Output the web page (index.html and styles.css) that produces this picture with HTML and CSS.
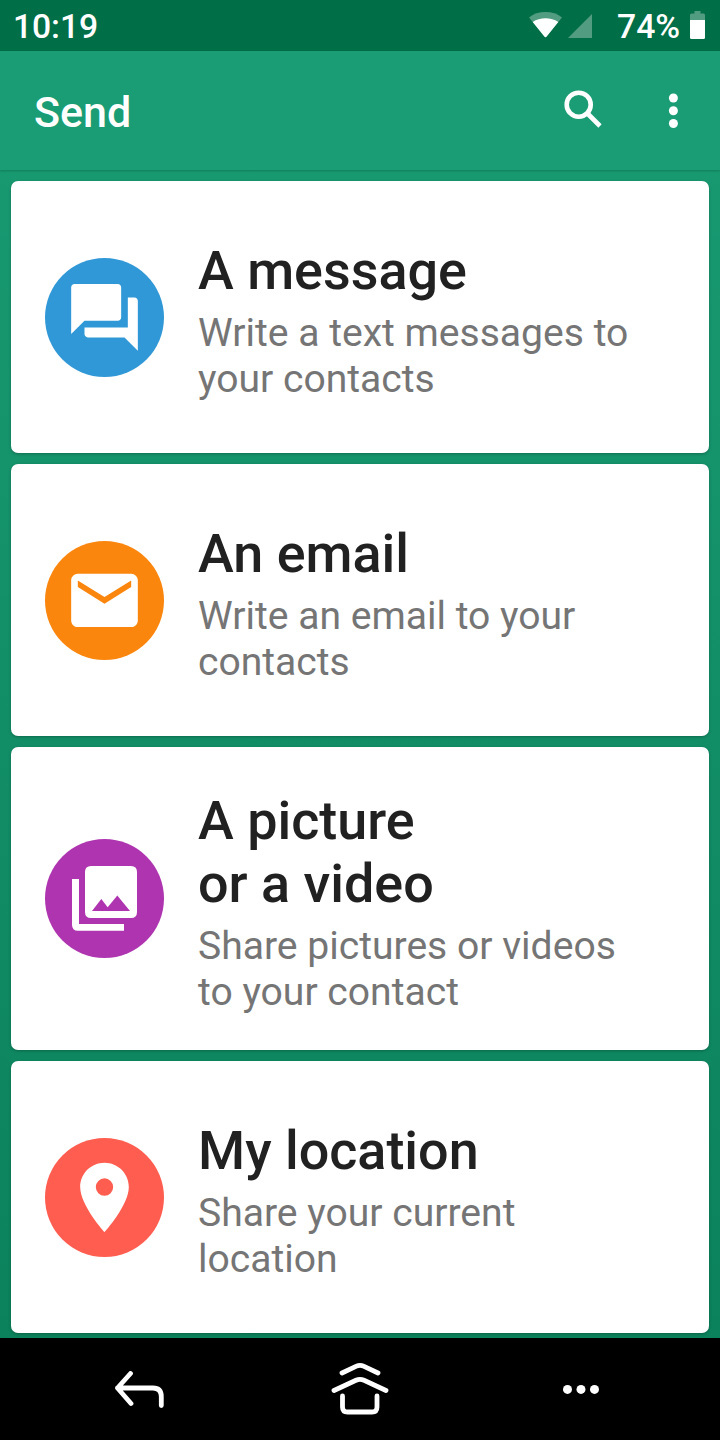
FILE: index.html
```html
<!DOCTYPE html>
<html lang="en">
<head>
<meta charset="utf-8">
<title>Send</title>
<link rel="stylesheet" href="styles.css">
</head>
<body>
<div class="screen">
  <header class="status">
    <span class="clock">10:19</span>
    <svg class="signals" width="64" height="27" viewBox="0 0 64 27">
      <path class="dim" d="M0 5.500C9-1.800 24-1.800 33 5.500L16.500 25.500z"/>
      <path d="M3.700 10C11 5 22 5 29.300 10L17.700 24.500Q16.500 26 15.300 24.500z"/>
      <path class="dim" d="M39 26L63 2v24z"/>
    </svg>
    <span class="percent">74%</span>
    <svg class="battery" width="15" height="28" viewBox="0 0 15 28">
      <path class="dim" d="M0 9V4q0-1.500 1.500-1.500H4.500V0h6v2.500h3q1.500 0 1.500 1.500v5z"/>
      <path d="M0 9h15v17.500q0 1.500-1.500 1.500h-12Q0 28 0 26.500z"/>
    </svg>
  </header>
  <nav class="toolbar">
    <h1 class="heading">Send</h1>
    <svg class="search" width="39" height="39" viewBox="0 0 39 39">
      <circle cx="14.700" cy="14.700" r="12"/>
      <path d="M23.500 23.500L36 36"/>
    </svg>
    <svg class="more" width="10" height="36" viewBox="0 0 10 36">
      <circle cx="5.400" cy="5" r="4.500"/><circle cx="5.400" cy="17.700" r="4.500"/><circle cx="5.400" cy="30.500" r="4.500"/>
    </svg>
  </nav>
  <main class="cards">
    <section class="card">
      <svg class="badge blue" viewBox="0 0 119 119">
        <path transform="translate(19.500 19.400) scale(3.333)" d="M21 6h-2v9H6v2c0 .55.45 1 1 1h11l4 4V7c0-.55-.45-1-1-1zm-4 6V3c0-.55-.45-1-1-1H3c-.55 0-1 .45-1 1v14l4-4h10c.55 0 1-.45 1-1z"/>
      </svg>
      <div class="copy"><h2 class="title">A message</h2><p class="detail">Write a text messages to<br>your contacts</p></div>
    </section>
    <section class="card">
      <svg class="badge orange" viewBox="0 0 119 119">
        <path transform="translate(19.500 19.400) scale(3.333)" d="M20 4H4c-1.100 0-2 .9-2 2v12c0 1.100.9 2 2 2h16c1.100 0 2-.9 2-2V6c0-1.100-.9-2-2-2zm0 4l-8 5-8-5V6l8 5 8-5v2z"/>
      </svg>
      <div class="copy"><h2 class="title">An email</h2><p class="detail">Write an email to your<br>contacts</p></div>
    </section>
    <section class="card tall">
      <svg class="badge purple" viewBox="0 0 119 119">
        <path fill-rule="evenodd" d="M46 27H86Q92 27 92 33V73Q92 79 86 79H46Q40 79 40 73V33Q40 27 46 27zM47 72H85L72.300 56.500L62.700 68.300L56.300 60z"/>
        <path d="M27 40h7v45h45v6.700H33Q27 91.700 27 85.700z"/>
      </svg>
      <div class="copy"><h2 class="title">A picture<br>or a video</h2><p class="detail">Share pictures or videos<br>to your contact</p></div>
    </section>
    <section class="card">
      <svg class="badge red" viewBox="0 0 119 119">
        <path transform="translate(17.800 17.750) scale(3.475)" d="M12 2C8.130 2 5 5.130 5 9c0 5.250 7 13 7 13s7-7.750 7-13c0-3.870-3.130-7-7-7zm0 9.500a2.500 2.500 0 1 1 0-5 2.500 2.500 0 0 1 0 5z"/>
      </svg>
      <div class="copy"><h2 class="title">My location</h2><p class="detail">Share your current<br>location</p></div>
    </section>
  </main>
  <footer class="navbar">
    <svg class="back" width="50" height="37" viewBox="0 0 50 37">
      <path d="M15.500 2.500L2.500 17L16 32.500M2.500 17H38Q46.300 17 46.300 25.500V34.500"/>
    </svg>
    <svg class="home" width="58" height="53" viewBox="0 0 58 53">
      <path d="M11 11L25.500 4.200Q29 2.500 32.500 4.200L47 11M3 28.500L25 18.300Q29 16.500 33 18.300L55 28.500M11.500 34V45Q11.500 50 16.500 50H41Q46 50 46 45V34"/>
    </svg>
    <svg class="dots" width="36" height="10" viewBox="0 0 36 10">
      <circle cx="4.500" cy="5.400" r="4.500"/><circle cx="18" cy="5.400" r="4.500"/><circle cx="31.500" cy="5.400" r="4.500"/>
    </svg>
  </footer>
</div>
</body>
</html>
```
FILE: styles.css
```css
* { box-sizing: border-box; }
body { margin: 0; font-family: Roboto, sans-serif; }
h1, h2, p { margin: 0; }
svg { display: block; flex: none; fill: #fff; }
.screen { width: 720px; height: 1440px; display: flex; flex-direction: column; overflow: hidden; background: linear-gradient(#1a9c73, #0b825b 1338px); }
.status { height: 51px; flex: none; display: flex; align-items: flex-start; padding: 0 15px 0 13px; background: #006e46; color: #fff; font-size: 33.7px; line-height: 54px; font-weight: 500; }
.clock { flex: 1; letter-spacing: -.1px; }
.dim { opacity: .32; }
.signals { margin: 12px 24px 0 0; }
.percent { width: 62px; white-space: nowrap; }
.battery { margin: 11px 0 0 11px; }
.toolbar { height: 119px; flex: none; display: flex; align-items: flex-start; padding: 0 42px 0 34px; background: #1a9d74; box-shadow: 0 1px 2px rgba(0, 60, 35, .3); }
.heading { flex: 1; padding-top: 36px; font-size: 43px; line-height: 50px; font-weight: 500; color: #fff; }
.search { margin: 39px 65px 0 0; fill: none; stroke: #fff; stroke-width: 4.6; }
.more { margin-top: 42px; }
.cards { flex: 1; display: flex; flex-direction: column; gap: 11px; padding: 11px 11px 5px; }
.card { height: 272px; flex: none; display: flex; align-items: flex-start; gap: 34px; padding: 58px 0 0 34px; background: #fff; border-radius: 7px; box-shadow: 0 1px 3px rgba(0, 0, 0, .25); }
.tall { height: 303px; padding-top: 42px; }
.badge { width: 119px; height: 119px; margin-top: 19px; border-radius: 50%; }
.tall .badge { margin-top: 50px; }
.blue { background: #3198d7; }
.orange { background: #fa860d; }
.purple { background: #af35b0; }
.red { background: #ff5d4f; }
.title { font-size: 53.9px; line-height: 63px; font-weight: 500; color: #212121; }
.detail { margin-top: 8px; font-size: 39.1px; line-height: 46px; color: #757575; white-space: nowrap; }
.navbar { height: 102px; flex: none; display: flex; align-items: flex-start; padding-left: 115px; background: #000; }
.back, .home { fill: none; stroke: #fff; stroke-width: 4.8; stroke-linecap: round; stroke-linejoin: round; }
.back { margin-top: 33px; }
.home { margin: 24px 0 0 166px; }
.dots { margin: 46px 0 0 174px; }
```
